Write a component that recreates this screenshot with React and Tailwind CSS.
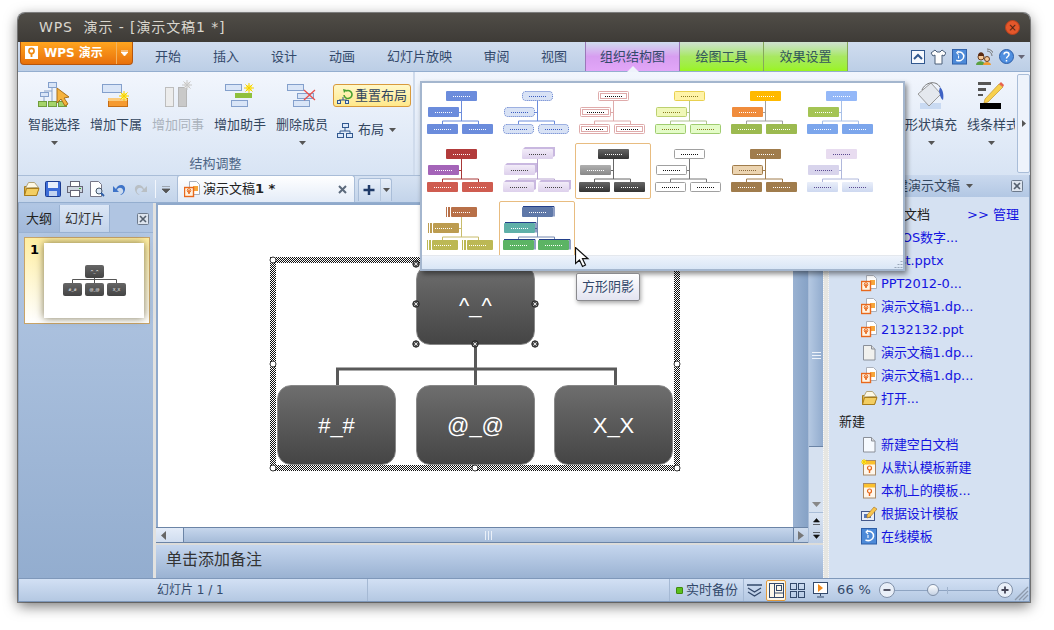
import React from 'react';

const Spark = ({ x, y, r = 5, c = '#f5d000' }) => {
  const rays = [0, 45, 90, 135, 180, 225, 270, 315];
  return (
    <g>
      <rect x={x - r * 0.6} y={y - r * 0.6} width={r * 1.2} height={r * 1.2} fill={c === '#f5d000' ? '#fff27a' : '#e8e8e8'} />
      {rays.map((a) => (
        <line key={a} x1={x} y1={y} x2={x + r * Math.cos((a * Math.PI) / 180)} y2={y + r * Math.sin((a * Math.PI) / 180)} stroke={c} strokeWidth="1" />
      ))}
    </g>
  );
};

const Bx = ({ x, y, w, h, f = '#d9e5f7', s = '#84a0cc' }) => (
  <rect x={x + 0.5} y={y + 0.5} width={w} height={h} fill={f} stroke={s} />
);

const SmartIcon = () => (
  <svg width="36" height="32">
    <Bx x={12} y={3} w={8} h={5} />
    <Bx x={4} y={13} w={8} h={4} />
    <path d="M16 8v14M8 17v5M8 12h8" stroke="#8aa3c8" fill="none" />
    <Bx x={2} y={22} w={8} h={5} f="#a5d46a" s="#6f9c3c" />
    <Bx x={12} y={22} w={8} h={5} f="#a5d46a" s="#6f9c3c" />
    <Bx x={22} y={22} w={8} h={5} f="#a5d46a" s="#6f9c3c" />
    <path d="M21 9l0 15 4-4 4 7 3-2-4-6 5-1z" fill="#f6b23c" stroke="#a8701c" />
  </svg>
);
const AddSubIcon = () => (
  <svg width="36" height="32">
    <Bx x={4} y={5} w={19} h={8} />
    <rect x="10.5" y="19.5" width="19" height="8" fill="#f59a30" stroke="#c46c14" />
    <rect x="10" y="19" width="19" height="3" fill="#fbcb7c" />
    <Spark x={26} y={17} r={5} />
  </svg>
);
const AddPeerIcon = () => (
  <svg width="36" height="32">
    <rect x="5.5" y="8.5" width="8" height="19" fill="#ececec" stroke="#bdbdbd" />
    <rect x="18.5" y="8.5" width="8" height="19" fill="#c9c9c9" stroke="#b5b5b5" />
    <Spark x={27} y={6} r={5} c="#c8c8c8" />
  </svg>
);
const AddHelperIcon = () => (
  <svg width="36" height="32">
    <Bx x={3} y={5} w={16} h={6} />
    <rect x="13" y="14" width="17" height="5" fill="#8fc03c" />
    <Bx x={9} y={21} w={16} h={6} />
    <Spark x={27} y={9} r={5} />
  </svg>
);
const DeleteIcon = () => (
  <svg width="36" height="32">
    <Bx x={3} y={5} w={16} h={6} />
    <Bx x={13} y={14} w={16} h={5} />
    <Bx x={9} y={21} w={16} h={6} />
    <path d="M20 11l11 10M31 11L20 21" stroke="#e8504c" strokeWidth="1.3" fill="none" />
  </svg>
);
const FillIcon = () => (
  <svg width="36" height="32">
    <rect x="7" y="24" width="21" height="6" fill="#c9daf2" />
    <path d="M18 4L5 15l11 12 12-12z" fill="#e4e8ee" stroke="#9a9a9a" />
    <path d="M9 11c3-8 14-10 18-3" fill="none" stroke="#777" />
    <path d="M27 8c3 3 4 8 3 13-3-2-3-6-4-9z" fill="#3f62c4" />
  </svg>
);
const LineIcon = () => (
  <svg width="36" height="32">
    <rect x="5" y="3" width="13" height="3" fill="#555" />
    <rect x="5" y="9" width="8" height="3" fill="#555" />
    <rect x="5" y="15" width="5" height="2" fill="#555" />
    <path d="M12 20L26 5l4 3-15 15-4 1z" fill="#f7d04e" stroke="#b88a1c" strokeWidth="0.6" />
    <path d="M26 5l4 3 1-2-3-3z" fill="#e8624c" />
    <rect x="7" y="24" width="21" height="6" fill="#000" />
  </svg>
);

const OrgMini = ({ size = 16 }) => (
  <svg width={size} height={size} viewBox="0 0 16 16">
    <Bx x={5} y={1} w={6} h={4} f="#dbe8fa" s="#31588f" />
    <path d="M8 5v4M3 9h10M3 9v2M13 9v2" stroke="#31588f" fill="none" />
    <Bx x={0} y={11} w={6} h={4} f="#dbe8fa" s="#31588f" />
    <Bx x={9} y={11} w={6} h={4} f="#dbe8fa" s="#31588f" />
  </svg>
);

const PptDoc = () => (
  <svg width="16" height="17">
    <path d="M5.5 .5h7l3 3v10h-10z" fill="#fff" stroke="#aab0bb" />
    <rect x="9" y="5" width="5" height="5" fill="#f6a63c" />
    <rect x=".5" y="6.5" width="9" height="9" fill="#fff3e2" stroke="#e8681c" strokeWidth="1.4" />
    <path d="M5 13V9" stroke="#e8681c" strokeWidth="1.5" />
    <circle cx="5" cy="9.5" r="1.8" fill="none" stroke="#e8681c" />
  </svg>
);
const BlankDoc = ({ blue }) => (
  <svg width="16" height="17">
    <path d="M2.5 1.5h8l3.5 3.5v11h-11.5z" fill={blue ? '#f6faff' : '#f1f1ee'} stroke="#8a8f98" />
    <path d="M10.5 1.5v3.5h3.5" fill="#dcdcdc" stroke="#8a8f98" />
  </svg>
);
const Folder = () => (
  <svg width="17" height="16">
    <path d="M1.5 5.5v9h12l2-8h-9l-1-1z" fill="#e9b93f" stroke="#a87d1c" />
    <path d="M2.5 7l3-5.5h6l4 5z" fill="#fdf8e4" stroke="#b3a57a" />
    <path d="M1.5 14.5l2-7h12.5l-2.5 7z" fill="#f3ce63" stroke="#a87d1c" />
  </svg>
);
const Template = ({ spark }) => (
  <svg width="16" height="17">
    <rect x="2.5" y="1.5" width="12" height="14.5" fill="#fff7ec" stroke="#a88a68" />
    <rect x="3" y="2" width="11" height="3.5" fill="#fbc02d" />
    <circle cx="8.5" cy="9" r="2" fill="none" stroke="#e8681c" strokeWidth="1.2" />
    <path d="M8.5 11v3" stroke="#e8681c" strokeWidth="1.4" />
    {spark && <Spark x={3} y={3} r={3} />}
  </svg>
);
const DesignIcon = () => (
  <svg width="16" height="17">
    <rect x=".5" y="6.5" width="13" height="9" fill="#e8eefa" stroke="#44588a" />
    <rect x="3" y="9" width="7" height="4" fill="#5878b8" />
    <path d="M6 10l7-8 3 2-7 8-3 1z" fill="#f7c54e" stroke="#a8701c" strokeWidth="0.6" />
  </svg>
);
const OnlineIcon = ({ size = 16 }) => (
  <svg width={size} height={size + 1} viewBox="0 0 16 17">
    <rect x=".5" y=".5" width="15" height="15.5" fill="#4d8ad8" stroke="#2d5ea8" />
    <path d="M6 3.5c4-1 7 1.5 6.5 5S8 13.5 4.5 12" fill="none" stroke="#fff" strokeWidth="1.6" />
    <path d="M7 2l-2 2 2 2M7 7v3" fill="none" stroke="#fff" strokeWidth="1.1" />
  </svg>
);

const PaneClose = () => (
  <svg width="12" height="12">
    <rect x=".5" y=".5" width="11" height="11" rx="1" fill="#dde4ee" stroke="#6d7a8c" />
    <path d="M3 3l6 6M9 3L3 9" stroke="#55606e" strokeWidth="1.6" />
  </svg>
);
const Caret = ({ c = '#555' }) => (
  <svg width="7" height="4" className="shrink-0">
    <path d="M0 0h7L3.5 4z" fill={c} />
  </svg>
);

// gallery thumbnails
const white = '#ffffff';
const thumbs = [
  { t: ['#6b8cdc'], l: ['#6b8cdc'], b: ['#6b8cdc'], line: '#6b8cdc', dot: white },
  { t: ['#d8e2f5', '#4f70c8'], l: ['#d8e2f5', '#4f70c8'], b: ['#d8e2f5', '#4f70c8'], line: '#6b8cdc', dot: '#3a5cc0', kind: 'dotted' },
  { t: [white, '#dfabab'], l: [white, '#dfabab'], b: [white, '#dfabab'], line: '#dfabab', dot: '#111', kind: 'double' },
  { t: ['#fff3a8', '#e8d050'], l: ['#f0f8b8', '#bcd070'], b: ['#e4fcc8', '#a0cc70'], line: '#b0c490', dot: '#8a7a20' },
  { t: ['#ffb900'], l: ['#f08c3c'], b: ['#9cba50'], line: '#a0a0a0', dot: white },
  { t: ['#94b8f8'], l: ['#a4c454'], b: ['#7ca6ec'], line: '#a8c0e8', dot: white },
  { t: ['#b23b3b'], l: ['#a464b8'], b: ['#cf5c50'], line: '#a83838', dot: white },
  { t: ['url(#gLav)'], l: ['url(#gLav)'], b: ['url(#gLav)'], line: '#b8a4d0', dot: '#444', kind: 'cube' },
  { t: ['url(#gDark)'], l: ['url(#gGrey)'], b: ['url(#gDark)'], line: '#666', dot: white, sel: true },
  { t: [white, '#a0a0a0'], l: [white, '#a0a0a0'], b: [white, '#a0a0a0'], line: '#777', dot: '#111' },
  { t: ['#a07c4c'], l: ['#ecd4b0', '#a07c4c'], b: ['#a07c4c'], line: '#a07c4c', dot: white, leftDot: '#8a6a3c' },
  { t: ['#e8dcf0'], l: ['#d8d4ec'], b: ['url(#gPale)'], line: '#b0b8dc', dot: '#5a4a90' },
  { t: ['#b87048'], l: ['#bc9c50'], b: ['#bcb854'], line: '#c8bc6c', dot: white, kind: 'bars' },
  { t: ['#5f78a8'], l: ['#5fb0a8'], b: ['#5cb464'], line: '#7488b0', dot: white, kind: 'shadow', sel: true },
];

const ThumbBox = ({ x, y, s, kind, dot }) => {
  const [f, st] = s;
  const bars = kind === 'bars';
  const bx = bars ? x + 5 : x;
  const bw = bars ? 26 : 31;
  return (
    <g>
      {kind === 'cube' && <path d={`M${x + 1} ${y}l2-2h30v9l-2 1z`} fill="#c9b8e0" />}
      {kind === 'shadow' && <path d={`M${x + 1} ${y - 0.5}h31v10`} stroke="#23408a" fill="none" />}
      {bars && (
        <g fill={f}>
          <rect x={x} y={y} width="1" height="10" />
          <rect x={x + 2} y={y} width="2" height="10" />
        </g>
      )}
      <rect
        x={st ? bx + 0.5 : bx}
        y={st ? y + 0.5 : y}
        width={st ? bw - 1 : bw}
        height={st ? 9 : 10}
        rx={kind === 'dotted' ? 3 : 1}
        fill={f}
        stroke={st}
        strokeDasharray={kind === 'dotted' ? '1 1' : undefined}
      />
      {kind === 'double' && <rect x={x + 2.5} y={y + 2.5} width="26" height="5" fill="none" stroke={st} />}
      <line x1={x + 7} x2={x + 25} y1={y + 5.5} y2={y + 5.5} stroke={dot} strokeDasharray="1 1" />
    </g>
  );
};

const Thumb = ({ spec }) => (
  <div className="relative">
    {spec.sel && <div className="absolute left-[-2px] top-[-1px] w-[76px] h-[56px] border border-[#e8bc80] rounded-[2px]" />}
    <svg width="76" height="58" className="relative">
      <path d="M36.5 15v20M34 26.5h2M17.5 38v-3h36v3" stroke={spec.line} fill="none" />
      <ThumbBox x={21} y={5} s={spec.t} kind={spec.kind} dot={spec.dot} />
      <ThumbBox x={3} y={21} s={spec.l} kind={spec.kind} dot={spec.leftDot || spec.dot} />
      <ThumbBox x={2} y={38} s={spec.b} kind={spec.kind} dot={spec.dot} />
      <ThumbBox x={37} y={38} s={spec.b} kind={spec.kind} dot={spec.dot} />
    </svg>
  </div>
);

const RibbonBtn = ({ icon, label, off, arrow }) => (
  <div className="w-[62px] flex flex-col items-center">
    <div className="h-[32px]">{icon}</div>
    <div className={`mt-[5px] text-[13px] leading-[18px] whitespace-nowrap ${off ? 'text-[#aab2bc]' : 'text-[#33465e]'}`}>{label}</div>
    {arrow && <div className="mt-[7px]"><Caret /></div>}
  </div>
);

const PaneRow = ({ icon, children }) => (
  <div className="h-[23px] flex items-center pl-[32px] gap-[4px]">
    <div className="w-[16px] h-[17px] shrink-0">{icon}</div>
    <span className="text-[13px] text-[#1414e0] whitespace-nowrap tracking-[-0.1px]">{children}</span>
  </div>
);

const Node = ({ cls, text }) => (
  <div className={`absolute w-[119px] h-[80px] rounded-[14px] border border-[#888] bg-gradient-to-b from-[#6e6e6e] to-[#454545] flex items-center justify-center text-white text-[22px] font-['Liberation_Sans',sans-serif] ${cls}`}>
    {text}
  </div>
);

const Handle = ({ x, y }) => <circle cx={x} cy={y} r="3" fill="#fff" stroke="#333" />;
const XHandle = ({ x, y }) => (
  <g>
    <circle cx={x} cy={y} r="3.2" fill="#555" stroke="#222" />
    <path d={`M${x - 1.6} ${y - 1.6}l3.2 3.2m0-3.2l-3.2 3.2`} stroke="#fff" strokeWidth="0.8" />
  </g>
);

const Tab = ({ label, w }) => (
  <div className={`${w} text-center text-[13px] text-[#33496b] whitespace-nowrap`}>{label}</div>
);

export default function App() {
  return (
    <div className="relative w-[1054px] h-[630px] bg-white overflow-hidden pl-[18px] pt-[13px] font-['DejaVu_Sans','Noto_Sans_CJK_SC',sans-serif]">
      <svg width="0" height="0" className="absolute">
        <defs>
          <linearGradient id="gDark" x1="0" y1="0" x2="0" y2="1"><stop offset="0" stopColor="#666" /><stop offset="1" stopColor="#333" /></linearGradient>
          <linearGradient id="gGrey" x1="0" y1="0" x2="0" y2="1"><stop offset="0" stopColor="#b0b0b0" /><stop offset="1" stopColor="#888" /></linearGradient>
          <linearGradient id="gLav" x1="0" y1="0" x2="0" y2="1"><stop offset="0" stopColor="#f2ecf8" /><stop offset="1" stopColor="#ddd0ec" /></linearGradient>
          <linearGradient id="gPale" x1="0" y1="0" x2="0" y2="1"><stop offset="0" stopColor="#eaeffa" /><stop offset="1" stopColor="#cdd8f0" /></linearGradient>
          <pattern id="checker" width="2" height="2" patternUnits="userSpaceOnUse">
            <rect width="1" height="1" fill="#111" />
            <rect x="1" y="1" width="1" height="1" fill="#111" />
          </pattern>
        </defs>
      </svg>

      <div className="w-[1012px] h-[589px] flex flex-col rounded-t-[7px] overflow-hidden shadow-[0_0_0_1px_rgba(60,60,60,0.6),0_4px_14px_rgba(0,0,0,0.55)] bg-[#b8cbe4]">
        {/* title bar */}
        <div className="h-[29px] shrink-0 flex items-center justify-between bg-gradient-to-b from-[#504d47] to-[#3e3b37] pl-[21px] pr-[10px]">
          <div className="text-[14px] text-[#d9d6ce] tracking-[0.9px] whitespace-pre">WPS  演示 - [演示文稿1 *]</div>
          <div className="w-[15px] h-[15px] rounded-full bg-[#e4572b] border border-[#b8401c] flex items-center justify-center text-[10px] leading-none text-[#4a2010]">×</div>
        </div>

        {/* menu tabs */}
        <div className="h-[30px] shrink-0 flex bg-gradient-to-b from-[#d0ddef] to-[#bccee6] border-b border-[#94aecf]">
          <div className="w-[113px] h-[23px] ml-[2px] flex items-center rounded-b-[4px] bg-gradient-to-b from-[#ffa51f] to-[#e8700a] border border-t-0 border-[#b5560e] shrink-0">
            <svg width="14" height="14" className="ml-[4px] shrink-0">
              <rect width="13" height="13" fill="#fff" />
              <circle cx="6.5" cy="5" r="2.6" fill="none" stroke="#ef8a12" strokeWidth="1.6" />
              <path d="M6.5 7v4" stroke="#ef8a12" strokeWidth="1.8" />
            </svg>
            <span className="ml-[5px] w-[73px] text-[12px] font-bold text-white whitespace-pre">WPS 演示</span>
            <div className="h-full w-[16px] border-l border-[#f3b25e] flex items-center justify-center">
              <svg width="7" height="6"><path d="M0 0h7M0 2h7L3.5 6z" stroke="#fff" strokeWidth="0.8" fill="#fff" /></svg>
            </div>
          </div>
          <div className="flex items-center pl-[6px]">
            <Tab label="开始" w="w-[58px]" />
            <Tab label="插入" w="w-[58px]" />
            <Tab label="设计" w="w-[58px]" />
            <Tab label="动画" w="w-[58px]" />
            <Tab label="幻灯片放映" w="w-[97px]" />
            <Tab label="审阅" w="w-[57px]" />
            <Tab label="视图" w="w-[58px]" />
          </div>
          <div className="relative w-[95px] ml-[2px] h-full flex items-center justify-center text-[13px] text-[#33496b] bg-gradient-to-b from-[#cfdcee] via-[#d79df0] to-[#e2a6f8] border-x border-[#9a78b8]">
            组织结构图
            <div className="absolute bottom-[-1px] left-1/2 -translate-x-1/2 w-0 h-0 border-x-[6px] border-x-transparent border-b-[6px] border-b-[#eef3fb]" />
          </div>
          <div className="w-[84px] h-full flex items-center justify-center text-[13px] text-[#33585a] bg-gradient-to-b from-[#cfe0d0] via-[#a8e860] to-[#9af41c] border-r border-[#86a85a]">绘图工具</div>
          <div className="w-[84px] h-full flex items-center justify-center text-[13px] text-[#33585a] bg-gradient-to-b from-[#cfe0d0] via-[#a8e860] to-[#9af41c] border-r border-[#86a85a]">效果设置</div>
          <div className="flex-1 flex items-center pl-[63px]">
            <svg width="14" height="14"><rect x=".5" y=".5" width="13" height="13" fill="#f6f9fe" stroke="#31588f" /><path d="M3 9l4-4 4 4" fill="none" stroke="#31588f" strokeWidth="2" /></svg>
            <svg width="16" height="16" className="ml-[5px]"><path d="M5 1L1 4l2 3 2-1v9h7V6l2 1 2-3-4-3-2 2H7z" fill="#fdfdfd" stroke="#4a5e78" /></svg>
            <div className="ml-[6px]"><OnlineIcon size={15} /></div>
            <svg width="18" height="18" className="ml-[8px]"><circle cx="6" cy="9" r="3" fill="#f4c898" stroke="#6b4020" /><path d="M3 8c0-5 6-5 6 0z" fill="#5a2a10" /><path d="M1 17c0-5 9-5 9 0z" fill="#5aa040" /><circle cx="12" cy="11" r="2.5" fill="#f4c898" stroke="#6b4020" /><path d="M8 17c0-4 8-4 8 0z" fill="#ef9a30" /><path d="M12 3a5 5 0 015 5M12 1a7 7 0 017 7" fill="none" stroke="#777" /></svg>
            <svg width="15" height="15" className="ml-[6px]"><circle cx="7.5" cy="7.5" r="7" fill="#4f8fe0" stroke="#2d5ea8" /><path d="M5 5.5c0-3 5-3 5 0 0 2-2.5 2-2.5 4M7.5 11v1.5" fill="none" stroke="#fff" strokeWidth="1.5" /></svg>
            <div className="ml-[4px]"><Caret c="#667" /></div>
          </div>
        </div>

        {/* ribbon */}
        <div className="h-[103px] shrink-0 flex bg-gradient-to-b from-[#f2f6fd] to-[#d8e4f4]">
          <div className="w-[397px] shrink-0 flex flex-col border-r-2 border-[#cfdbec]">
            <div className="flex pl-[5px] pt-[7px]">
              <RibbonBtn icon={<SmartIcon />} label="智能选择" arrow />
              <RibbonBtn icon={<AddSubIcon />} label="增加下属" />
              <RibbonBtn icon={<AddPeerIcon />} label="增加同事" off />
              <RibbonBtn icon={<AddHelperIcon />} label="增加助手" />
              <RibbonBtn icon={<DeleteIcon />} label="删除成员" arrow />
              <div className="flex flex-col">
                <div className="mt-[5px] w-[78px] h-[23px] flex items-center gap-[2px] pl-[3px] rounded-[3px] border border-[#d89a3c] bg-gradient-to-b from-[#fff8c8] to-[#ffe88a] text-[13px] text-[#33465e] whitespace-nowrap">
                  <svg width="16" height="16" className="shrink-0"><path d="M9 3a4 4 0 11-2 4" fill="none" stroke="#4aa030" strokeWidth="1.6" /><path d="M6 1l4 1-3 3z" fill="#4aa030" /><path d="M6 9v3M2 14v-2h8v2" stroke="#31588f" fill="none" /><rect x=".5" y="12.5" width="3" height="3" fill="#dbe8fa" stroke="#31588f" /><rect x="8.5" y="12.5" width="3" height="3" fill="#dbe8fa" stroke="#31588f" /></svg>
                  重置布局
                </div>
                <div className="mt-[13px] pl-[4px] flex items-center gap-[5px] text-[13px] text-[#33465e] whitespace-nowrap">
                  <OrgMini />
                  <span>布局</span>
                  <Caret />
                </div>
              </div>
            </div>
            <div className="mt-auto pb-[2px] text-center text-[13px] leading-[18px] text-[#4d6585]">结构调整</div>
          </div>
          <div className="flex-1 flex justify-end pt-[7px]">
            <RibbonBtn icon={<FillIcon />} label="形状填充" arrow />
            <div className="ml-[3px] w-[52px] flex flex-col items-center overflow-hidden">
              <div className="h-[32px]"><LineIcon /></div>
              <div className="mt-[5px] w-[48px] overflow-hidden text-[13px] leading-[18px] text-[#33465e] whitespace-nowrap">线条样式</div>
              <div className="mt-[7px]"><Caret /></div>
            </div>
          </div>
          <div className="w-[13px] shrink-0 my-[2px] border border-[#a9bdd8] bg-[#eef3fb] rounded-[2px] flex items-center justify-center">
            <svg width="4" height="7"><path d="M0 0l4 3.5L0 7z" fill="#555" /></svg>
          </div>
        </div>

        {/* body */}
        <div className="h-[403px] shrink-0 flex">
          <div className="w-[805px] shrink-0 flex flex-col">
            {/* quick access + document tabs */}
            <div className="h-[28px] shrink-0 flex items-end bg-gradient-to-b from-[#d6e2f2] to-[#c3d4ea] border-t border-[#a9bdd8] border-b border-b-[#94aecf]">
              <div className="h-full flex items-center pl-[5px] gap-[6px]">
                <Folder />
                <svg width="16" height="16" className="ml-[-1px]"><rect x=".5" y=".5" width="15" height="15" rx="1" fill="#3c6cd8" stroke="#1c3c90" /><rect x="3" y="1" width="10" height="6" fill="#e6eefc" /><rect x="4" y="10" width="8" height="5" fill="#c4d4f0" /></svg>
                <svg width="16" height="16"><rect x="3.5" y=".5" width="9" height="5" fill="#fff" stroke="#667" /><rect x=".5" y="5.5" width="15" height="6" fill="#cfd6e0" stroke="#667" /><rect x="3.5" y="9.5" width="9" height="6" fill="#fff" stroke="#667" /><rect x="12" y="7" width="2" height="1" fill="#3a3" /></svg>
                <svg width="16" height="16"><path d="M1.5 .5h8l3 3v12h-11z" fill="#fff" stroke="#778" /><circle cx="10" cy="10" r="3" fill="#dce8f8" stroke="#456" /><path d="M12 12l3 3" stroke="#2d5ea8" strokeWidth="1.8" /></svg>
                <svg width="16" height="16"><path d="M5 8c2-6 10-5 9 1-.5 3-3 5-5 5 2-1 4-3 3-5-1-3-5-3-6 0l2 2H2V5z" fill="#3f74c8" /></svg>
                <svg width="16" height="16"><path d="M11 8C9 2 1 3 2 9c.5 3 3 5 5 5-2-1-4-3-3-5 1-3 5-3 6 0l-2 2h6V5z" fill="#b9bfc4" /></svg>
                <div className="w-px h-[18px] bg-[#f2f6fc]" />
                <svg width="8" height="7"><path d="M0 0h8M0 3h8L4 7z" stroke="#555" strokeWidth="0.8" fill="#555" /></svg>
              </div>
              <div className="ml-[7px] w-[178px] h-[27px] flex items-center pl-[6px] pr-[6px] rounded-t-[3px] border border-b-0 border-[#a9bdd8] bg-gradient-to-b from-[#ffffff] to-[#e4ecf8] shrink-0">
                <PptDoc />
                <span className="ml-[3px] text-[13px] text-[#222] whitespace-pre">演示文稿<b>1 *</b></span>
                <svg width="9" height="9" className="ml-auto mr-[1px]"><path d="M1 1l7 7M8 1L1 8" stroke="#5c6a7c" strokeWidth="2" /></svg>
              </div>
              <div className="ml-[3px] w-[34px] h-[23px] mb-[1px] flex items-center rounded-t-[3px] border border-b-0 border-[#a9bdd8] bg-gradient-to-b from-[#e8eff9] to-[#cad9ed]">
                <svg width="21" height="12"><path d="M10 1v10M4.5 6h11" stroke="#1f3a68" strokeWidth="2.5" /></svg>
                <div className="h-full flex-1 border-l border-[#b7c8de] flex items-center justify-center"><Caret /></div>
              </div>
            </div>

            <div className="flex-1 flex min-h-0">
              {/* slides panel */}
              <div className="w-[135px] shrink-0 flex flex-col bg-gradient-to-b from-[#b6cae5] to-[#93adcf] border-l border-[#90a5c0]">
                <div className="h-[30px] shrink-0 flex pt-[2px] bg-[#b0c5e2] border-b border-[#9ab2d2]">
                  <div className="w-[40px] flex items-center justify-center text-[13px] text-[#222] bg-gradient-to-b from-[#b0c6e4] to-[#a2b9da]">大纲</div>
                  <div className="w-[51px] flex items-center justify-center text-[13px] text-[#333] bg-gradient-to-b from-[#dce7f6] to-[#c2d3ea] border-x border-[#9ab2d2]">幻灯片</div>
                  <div className="flex-1 flex items-center justify-end pr-[4px]"><PaneClose /></div>
                </div>
                <div className="ml-[5px] mr-[3px] mt-[4px] h-[87px] flex items-start border border-[#c8a468] bg-gradient-to-b from-[#ffeea0] to-[#ffffff] relative">
                  <span className="absolute left-[5px] top-[2px] text-[13px] font-bold text-black">1</span>
                  <div className="relative ml-[19px] mt-[5px] w-[100px] h-[75px] bg-white shadow-[0_0_8px_rgba(70,60,20,0.7)]">
                    <div className="absolute left-[41px] top-[22px] w-[19px] h-[13px] rounded-[2px] bg-gradient-to-b from-[#666] to-[#444] flex items-center justify-center text-white text-[4px]">^_^</div>
                    <div className="absolute left-[19px] top-[40px] w-[19px] h-[13px] rounded-[2px] bg-gradient-to-b from-[#666] to-[#444] flex items-center justify-center text-white text-[4px]">#_#</div>
                    <div className="absolute left-[41px] top-[40px] w-[19px] h-[13px] rounded-[2px] bg-gradient-to-b from-[#666] to-[#444] flex items-center justify-center text-white text-[4px]">@_@</div>
                    <div className="absolute left-[63px] top-[40px] w-[19px] h-[13px] rounded-[2px] bg-gradient-to-b from-[#666] to-[#444] flex items-center justify-center text-white text-[4px]">X_X</div>
                    <svg width="100" height="75" className="absolute left-0 top-0"><path d="M50.5 35v5M28.5 40v-3.5h44V40" stroke="#555" fill="none" /></svg>
                  </div>
                </div>
              </div>
              <div className="w-[3px] shrink-0 bg-[#e2e2e0]" />

              {/* slide, scrollbars and notes */}
              <div className="flex-1 min-w-0 flex flex-col">
                <div className="flex h-[340px] shrink-0">
                  <div className="flex-1 min-w-0 flex flex-col">
                    <div className="h-[324px] shrink-0 flex bg-[#8fa9cb]">
                      <div className="w-[637px] shrink-0 pl-[2px] pt-[2px]">
                        <div className="relative w-[635px] h-[322px] bg-white">
                          <svg width="635" height="322" className="absolute left-0 top-0">
                            <rect x="115" y="55" width="404" height="208" fill="none" stroke="url(#checker)" strokeWidth="6" />
                          </svg>
                          <Node cls="left-[258px] top-[60px]" text="^_^" />
                          <Node cls="left-[119px] top-[180px]" text="#_#" />
                          <Node cls="left-[258px] top-[180px]" text="@_@" />
                          <Node cls="left-[396px] top-[180px]" text="X_X" />
                          <svg width="635" height="322" className="absolute left-0 top-0">
                            <path d="M317.5 140v40M179.5 180v-16h278v16" fill="none" stroke="#595959" strokeWidth="3" />
                            <Handle x={115} y={55} /><Handle x={519} y={55} /><Handle x={115} y={159} /><Handle x={519} y={159} />
                            <Handle x={115} y={263} /><Handle x={317} y={263} /><Handle x={519} y={263} />
                            <XHandle x={258} y={59} /><XHandle x={258} y={99} /><XHandle x={377} y={99} />
                            <XHandle x={258} y={139} /><XHandle x={317} y={139} /><XHandle x={377} y={139} />
                          </svg>
                        </div>
                      </div>
                      <div className="flex-1 bg-gradient-to-r from-[#9ab2d2] to-[#86a2c6]" />
                    </div>
                    <div className="h-[16px] shrink-0 flex border-y border-[#6b84a6] bg-gradient-to-b from-[#c6d6ec] to-[#a6bcd9]">
                      <div className="w-[28px] flex items-center pl-[5px] bg-gradient-to-b from-[#e4ecf8] to-[#d0ddef] border-r border-[#6b84a6]">
                        <svg width="5" height="9"><path d="M5 0v9L0 4.5z" fill="#666" /></svg>
                      </div>
                      <div className="w-[609px] flex items-center justify-center text-[#7c8ea6]">
                        <svg width="10" height="9"><path d="M1.5 0v9M4.5 0v9M7.5 0v9" stroke="#eaf0f8" /></svg>
                      </div>
                      <div className="flex-1 flex items-center justify-center bg-gradient-to-b from-[#d0ddef] to-[#b8cae2] border-l border-[#6b84a6]">
                        <svg width="6" height="9"><path d="M0 0v9l6-4.5z" fill="#777" /></svg>
                      </div>
                    </div>
                  </div>
                  <div className="w-[15px] shrink-0 flex flex-col bg-[#d6e1f0] border-l border-[#a9bdd8]">
                    <div className="h-[244px] shrink-0 bg-gradient-to-r from-[#b4c8e2] to-[#92acce] border-b border-[#6b84a6] flex items-end justify-center pb-[86px]">
                      <svg width="9" height="8"><path d="M0 .5h9M0 3.5h9M0 6.5h9" stroke="#eef3fa" /></svg>
                    </div>
                    <div className="flex-1" />
                    <div className="h-[16px] flex items-center justify-center">
                      <svg width="9" height="5"><path d="M0 0h9L4.5 5z" fill="#888" /></svg>
                    </div>
                    <div className="h-[31px] border-t border-[#a9bdd8] bg-gradient-to-b from-[#dbe5f3] to-[#bccde4] flex flex-col items-center justify-around">
                      <svg width="7" height="8"><path d="M3.5 1.5L6.5 5h-6zM0 7.5h7" fill="#111" stroke="#111" strokeWidth="0.6" /></svg>
                      <svg width="7" height="8"><path d="M0 .5h7M.5 3h6L3.5 6.5z" fill="#111" stroke="#111" strokeWidth="0.6" /></svg>
                    </div>
                  </div>
                </div>
                <div className="h-[2px] shrink-0 bg-[#dcdcda]" />
                <div className="h-[33px] shrink-0 flex items-center pl-[10px] pb-[3px] bg-gradient-to-b from-[#c5d6ee] to-[#9ab2d2] text-[16px] text-[#333]">
                  单击添加备注
                </div>
              </div>
            </div>
          </div>

          <div className="w-[6px] shrink-0 bg-[#e6e6e2] border-x border-dotted border-[#f8f8f8]" />

          {/* task pane */}
          <div className="flex-1 min-w-0 flex flex-col bg-[#d5e1f2] border-r border-[#8ea4c2]">
            <div className="h-[22px] shrink-0 flex items-center pl-[53px] pr-[6px] bg-gradient-to-b from-[#cad9ee] to-[#b2c7e3] text-[13px] text-[#33465e]">
              <span>新建演示文稿</span>
              <span className="ml-[6px]"><Caret /></span>
              <span className="ml-auto"><PaneClose /></span>
            </div>
            <div className="pt-[6px]">
              <div className="h-[23px] flex items-center justify-between pl-[10px] pr-[10px] text-[13px]">
                <span className="text-[#222]">最近打开的文档</span>
                <span className="text-[#1414e0] whitespace-pre">&gt;&gt; 管理</span>
              </div>
              <PaneRow icon={<PptDoc />}>AWOS数字...</PaneRow>
              <PaneRow icon={<PptDoc />}>ttest.pptx</PaneRow>
              <PaneRow icon={<PptDoc />}>PPT2012-0...</PaneRow>
              <PaneRow icon={<PptDoc />}>演示文稿1.dp...</PaneRow>
              <PaneRow icon={<PptDoc />}>2132132.ppt</PaneRow>
              <PaneRow icon={<BlankDoc />}>演示文稿1.dp...</PaneRow>
              <PaneRow icon={<PptDoc />}>演示文稿1.dp...</PaneRow>
              <PaneRow icon={<Folder />}>打开...</PaneRow>
              <div className="h-[23px] flex items-center pl-[10px] text-[13px] text-[#222]">新建</div>
              <PaneRow icon={<BlankDoc blue />}>新建空白文档</PaneRow>
              <PaneRow icon={<Template spark />}>从默认模板新建</PaneRow>
              <PaneRow icon={<Template />}>本机上的模板...</PaneRow>
              <PaneRow icon={<DesignIcon />}>根据设计模板</PaneRow>
              <PaneRow icon={<OnlineIcon />}>在线模板</PaneRow>
            </div>
          </div>
        </div>

        {/* status bar */}
        <div className="h-[24px] shrink-0 flex items-center border-t border-[#7f98ba] border-b border-b-[#7f98ba] border-x border-x-[#7f98ba] bg-gradient-to-b from-[#d2e0f4] to-[#b4c8e2] text-[12px] text-[#33496b]">
          <div className="w-[349px] h-full flex items-center pl-[138px] border-r border-[#a5b9d4] whitespace-pre">幻灯片 1 / 1</div>
          <div className="w-[302px] h-full border-r border-[#a5b9d4]" />
          <div className="h-full flex items-center pl-[6px] pr-[5px] gap-[3px] border-r border-[#a5b9d4] text-[13px] whitespace-nowrap">
            <span className="w-[7px] h-[7px] rounded-[1px] bg-[#5cc01c] border border-[#3f8a10]" />
            实时备份
          </div>
          <svg width="16" height="13" className="ml-[3px]"><path d="M0 1h15M1 4l6.5 4L14 4M1 8l6.5 4L14 8" stroke="#33496b" strokeWidth="1.4" fill="none" /></svg>
          <div className="ml-[3px] w-[20px] h-[21px] flex items-center justify-center rounded-[2px] border border-[#e09a3c] bg-[#fbf7ea]">
            <svg width="15" height="15"><rect x=".5" y=".5" width="14" height="14" fill="none" stroke="#33496b" /><path d="M5.5 .5v14M5.5 10h9" stroke="#33496b" /><rect x="7.5" y="2.5" width="5" height="5" fill="none" stroke="#33496b" /></svg>
          </div>
          <svg width="15" height="15" className="ml-[4px]"><rect x=".5" y=".5" width="6" height="6" fill="none" stroke="#33496b" /><rect x="8.5" y=".5" width="6" height="6" fill="none" stroke="#33496b" /><rect x=".5" y="8.5" width="6" height="6" fill="none" stroke="#33496b" /><rect x="8.5" y="8.5" width="6" height="6" fill="none" stroke="#33496b" /></svg>
          <svg width="15" height="16" className="ml-[8px]"><rect x=".5" y=".5" width="14" height="11" fill="#fff" stroke="#33496b" /><path d="M5 2v8l5-4z" fill="#f08a1c" /><path d="M7.5 12v2M4 15h7" stroke="#33496b" /></svg>
          <span className="ml-[9px] text-[13px] whitespace-pre tracking-[0.3px]">66 %</span>
          <svg width="16" height="16" className="ml-[8px]"><circle cx="8" cy="8" r="7.5" fill="#e9eff8" stroke="#8090a8" /><path d="M4.5 8h7" stroke="#445" strokeWidth="1.8" /></svg>
          <div className="relative w-[102px] h-full flex items-center">
            <div className="w-full h-px bg-[#8ea4c2]" />
            <div className="absolute left-[52px] top-[8px] w-px h-[7px] bg-[#9fb2cc]" />
            <div className="absolute left-[32px] top-[5px] w-[12px] h-[12px] rounded-full border border-[#8090a8] bg-gradient-to-b from-[#fff] to-[#c5d2e4]" />
          </div>
          <svg width="16" height="16"><circle cx="8" cy="8" r="7.5" fill="#e9eff8" stroke="#8090a8" /><path d="M4.5 8h7M8 4.5v7" stroke="#445" strokeWidth="1.8" /></svg>
          <svg width="15" height="15" className="ml-auto self-end"><path d="M14 1L1 14M14 5L5 14M14 9l-5 5" stroke="#8d9aac" strokeWidth="1.3" /></svg>
        </div>
      </div>

      {/* layout gallery popup */}
      <div className="absolute left-[420px] top-[81px] w-[485px] h-[190px] bg-white border-2 border-[#a4b6ce] shadow-[2px_3px_5px_rgba(0,0,0,0.45)] flex flex-col">
        <div className="h-[172px] shrink-0 pl-[3px] pt-[3px] grid grid-cols-[repeat(6,76px)] auto-rows-[58px]">
          {thumbs.map((spec, i) => <Thumb key={i} spec={spec} />)}
        </div>
        <div className="flex-1 relative bg-gradient-to-b from-[#eef3fb] to-[#d9e6f6] border-t border-[#e4e8ee]">
          <svg width="10" height="9" className="absolute right-0 bottom-0"><path d="M8.5 1v1M5.5 4v1M8.5 4v1M2.5 7v1M5.5 7v1M8.5 7v1" stroke="#9aa8ba" strokeWidth="2" /></svg>
        </div>
      </div>

      {/* hover tooltip + cursor */}
      <div className="absolute left-[576px] top-[273px] w-[64px] h-[28px] flex items-center justify-center rounded-[2px] border border-[#8a8a8e] bg-gradient-to-b from-[#ffffff] to-[#e3e4f0] shadow-[1px_2px_4px_rgba(0,0,0,0.35)] text-[13px] text-[#33496b]">方形阴影</div>
      <svg width="15" height="22" className="absolute left-[575px] top-[247px]">
        <path d="M.5 .5v16l4-3.5 3 6.5 3-1.5-3-6.3h5.5z" fill="#fff" stroke="#111" strokeWidth="1.2" />
      </svg>
    </div>
  );
}
